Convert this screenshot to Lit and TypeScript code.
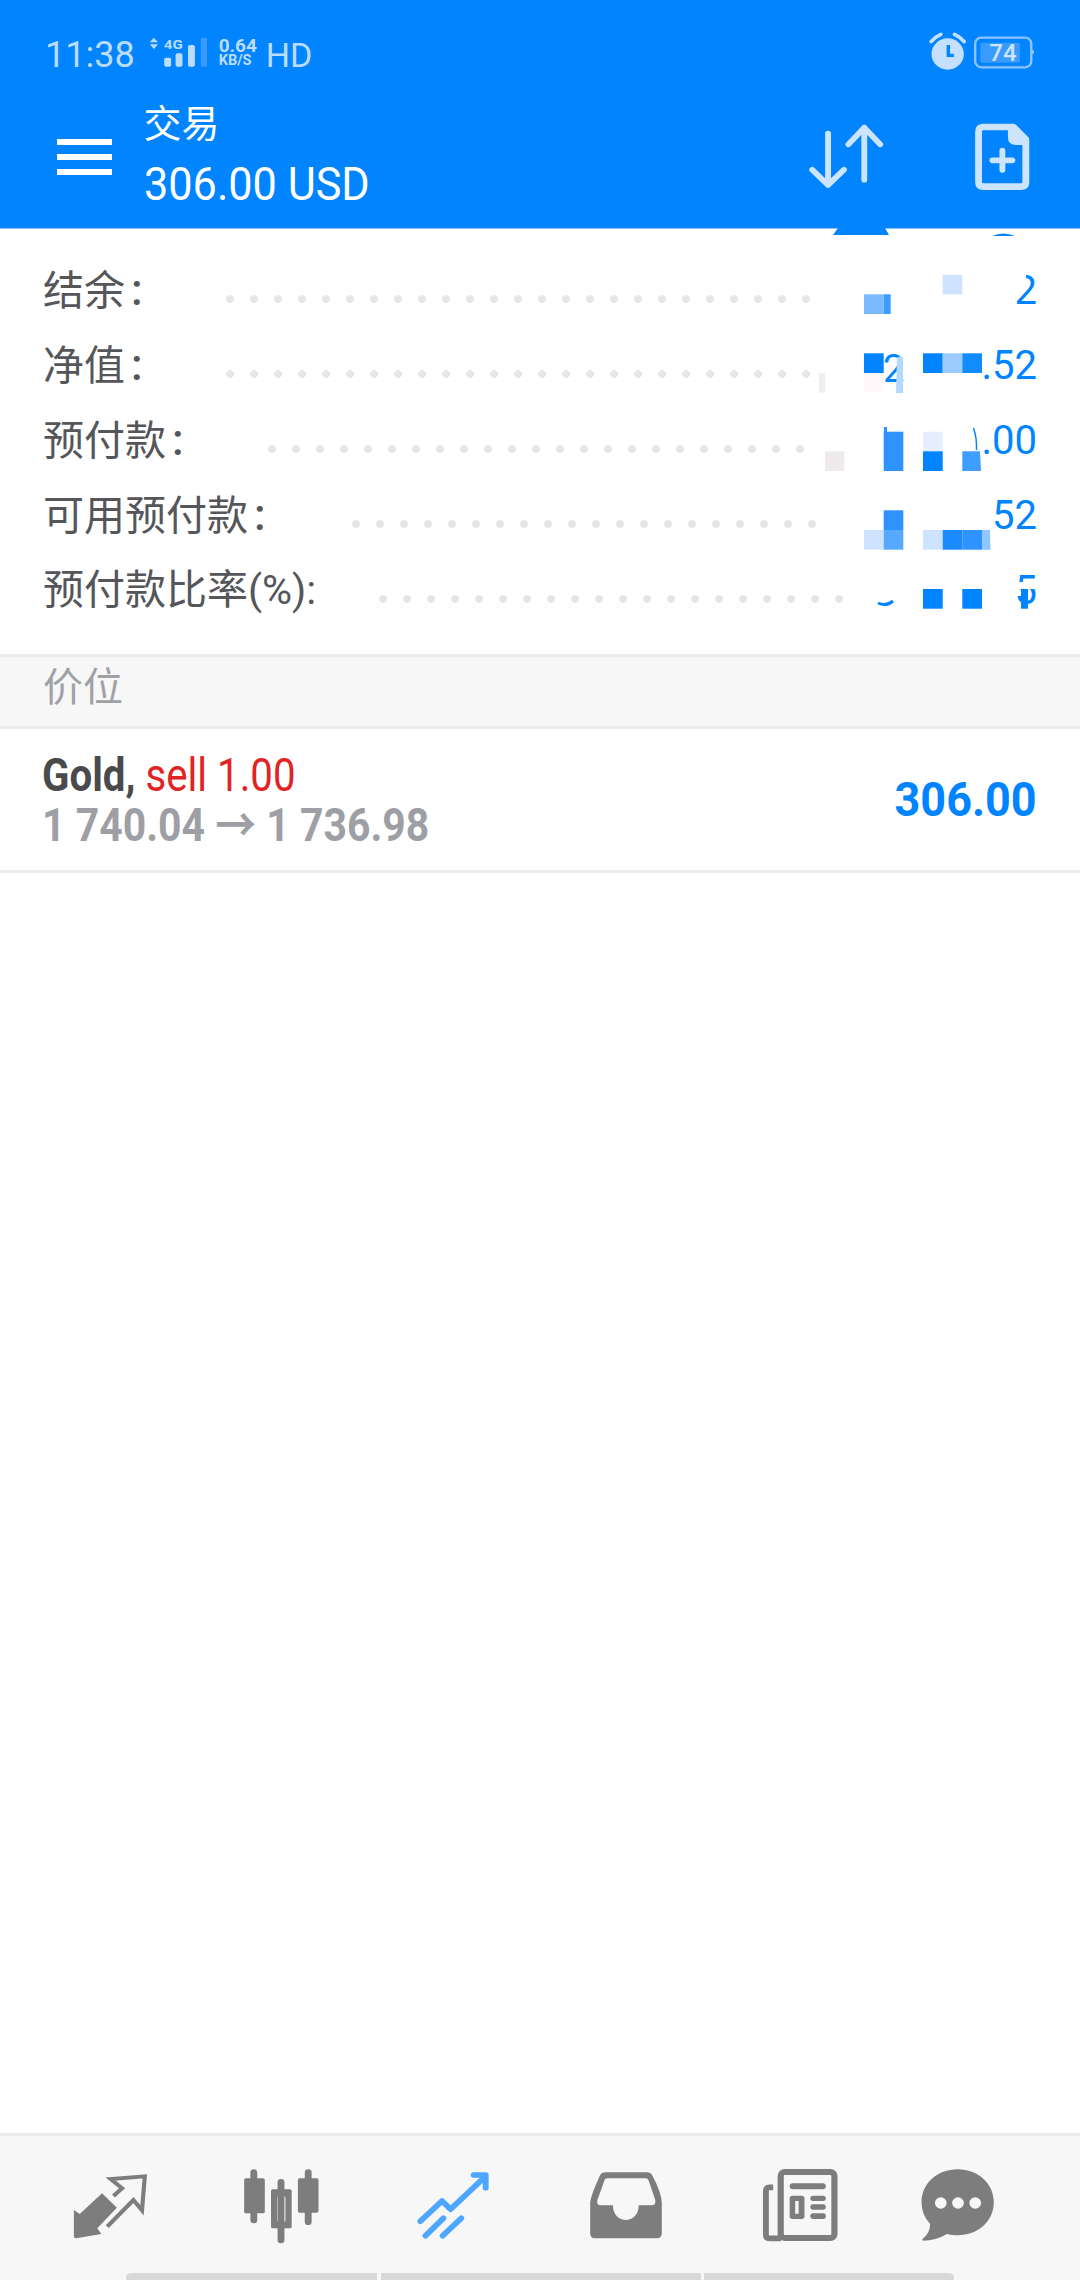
import { LitElement, html, css, svg } from "lit";
import { customElement } from "lit/decorators.js";
import { styleMap } from "lit/directives/style-map.js";

const DOT = 24;
const rows = [
  { label: "结余", colon: true, first: 229.7, count: 25, value: "2" },
  { label: "净值", colon: true, first: 229.7, count: 25, value: ".52" },
  { label: "预付款", colon: true, first: 272, count: 23, value: ".00" },
  { label: "可用预付款", colon: true, first: 356, count: 20, value: "52" },
  { label: "预付款比率(%):", colon: false, first: 383, count: 20, value: "5" },
];

const B = "#0084ff";
// Pixelated patches lying over the account values: x, y, w, h, colour
const cells: [number, number, number, number, string][] = [
  [1014, 274, 12, 10, "#ffffff"],
  [942.7, 275, 19.6, 19.4, "#cde3ff"],
  [864, 294.3, 19.7, 19.7, "#7bbaff"],
  [883.7, 294.3, 7, 19.7, "#3d9dff"],
  [864, 353.3, 19.7, 19.7, B],
  [864, 373, 19.7, 19.7, "#fff8fb"],
  [923, 353.3, 19.7, 19.7, B],
  [942.7, 353.3, 19.6, 19.7, "#9ccbff"],
  [962.3, 353.3, 19.7, 19.7, "#118cff"],
  [819, 373, 6, 19.7, "#eeeeee"],
  [884, 427, 3, 6, "#2e93ff"],
  [883.7, 431.7, 19.6, 39.3, "#2e93ff"],
  [923, 431.7, 19.7, 19.6, "#e5eeff"],
  [923, 451.3, 19.7, 19.7, B],
  [825, 451.3, 19.3, 19.7, "#eeeaee"],
  [883.7, 510.3, 19.6, 19.7, "#2e93ff"],
  [864, 530, 19.7, 19.7, "#cde3ff"],
  [883.7, 530, 19.6, 19.7, "#56a9ff"],
  [923, 530, 19.7, 19.7, "#cde3ff"],
  [942.7, 530, 19.6, 19.7, "#1a8bff"],
  [962.3, 530, 19.7, 19.7, "#2e93ff"],
  [923, 589, 19.7, 19.7, B],
  [962.3, 589, 19.7, 19.7, B],
  [1012, 582, 26, 7, "#ffffff"],
  [1021, 589, 7, 19.7, B],
];
const shapes = [
  { p: "897,357 903,357 903,393 896,393", c: "#b5d8ff" },
  { p: "962.3,451.3 980,451.3 981,471 962.3,471", c: "#3f9eff" },
  { p: "982,530 990,530 990.5,549.7 982,549.7", c: "#90c6ff" },
  { p: "838,228 885,228 889,235 833,235", c: B },
];

@customElement("app-root")
export class AppRoot extends LitElement {
  static styles = css`
    :host {
      display: flex;
      flex-direction: column;
      position: relative;
      width: 1080px;
      height: 2280px;
      overflow: hidden;
      background: #fff;
      font-family: Roboto, "Noto Sans CJK SC", sans-serif;
    }
    .header {
      background: #0084ff;
      border-bottom: 1px solid #8cc4ff;
      height: 228px;
      flex: none;
      display: flex;
      flex-direction: column;
    }
    .status {
      height: 64px;
      margin-top: 21px;
      flex: none;
      display: flex;
      align-items: center;
      padding: 0 46px 0 45px;
      color: #bcdcff;
    }
    .time { font-size: 36px; line-height: 40px; width: 103px; margin-top: 4px; }
    .signal { margin-top: -3px; display: block; }
    .speed {
      margin-left: 10.7px;
      display: flex;
      flex-direction: column;
      font-weight: 700;
      font-size: 19px;
      line-height: 17px;
      width: 40px;
      margin-top: -1px;
    }
    .speed small { font-size: 14.5px; line-height: 14px; }
    .hd { margin-left: 7px; font-size: 34px; line-height: 40px; margin-top: 4px; }
    .sys { margin-left: auto; display: block; margin-top: -3px; }
    .bar {
      flex: 1;
      display: flex;
      align-items: center;
      padding: 0 39px 0 57px;
    }
    .menu { width: 54.5px; display: flex; flex-direction: column; gap: 9px; }
    .menu i { display: block; height: 6px; background: #fff; }
    .title { margin-left: 32px; color: #fff; }
    .t1 { font-size: 38px; line-height: 60px; margin-top: -6px; }
    .t2 {
      font-size: 47px;
      line-height: 60px;
      transform: scaleX(0.92);
      transform-origin: left;
      white-space: nowrap;
    }
    .actions { margin-left: auto; display: flex; gap: 75px; }
    .actions svg { display: block; }

    .account { padding: 24px 0 26px; flex: none; }
    .row {
      height: 75px;
      display: flex;
      align-items: center;
      padding: 0 43px 0 43px;
      color: #55565a;
      font-size: 41px;
    }
    .label { flex: none; white-space: nowrap; line-height: 75px; }
    .colon { font-size: 44px; font-weight: 500; margin-left: 6px; }
    .leader {
      align-self: stretch;
      flex: none;
      background-image: radial-gradient(circle at 50% 46px, #e6e6e6 3.5px, transparent 4.3px);
      background-size: ${DOT}px 100%;
    }
    .value { margin-left: auto; color: #0084ff; font-size: 40px; }

    .section {
      flex: none;
      height: 69px;
      border-top: 3px solid #ebebeb;
      border-bottom: 3px solid #ebebeb;
      background: #f7f7f7;
      padding-left: 43px;
      font-size: 40px;
      line-height: 62px;
      color: #a0a1a6;
    }
    .position {
      flex: none;
      height: 141px;
      border-bottom: 3px solid #ebebeb;
      display: flex;
      align-items: center;
      justify-content: space-between;
      padding: 0 43px 0 42px;
      font-size: 46px;
      line-height: 50px;
    }
    .line { transform-origin: left; white-space: nowrap; }
    .gold { font-weight: 700; color: #4a4a4d; transform: scaleX(0.875); }
    .sell { color: #e02424; font-weight: 400; }
    .prices { font-weight: 700; color: #9d9fa4; transform: scaleX(0.89); }
    .profit {
      font-weight: 700;
      font-size: 48px;
      color: #0084ff;
      transform: scaleX(0.937);
      transform-origin: right;
    }
    .spacer { flex: 1; }

    .tabs {
      flex: none;
      height: 147px;
      box-sizing: border-box;
      border-top: 3px solid #ebebeb;
      background: #f7f7f7;
      padding-top: 24px;
      display: flex;
      flex-direction: column;
    }
    .icons {
      display: grid;
      grid-template-columns: 171.1px 172.2px 172.9px 173.6px 158px 84px;
      padding-left: 68.2px;
      height: 84px;
    }
    .icons svg { display: block; }
    .nav {
      margin-top: 29px;
      height: 7px;
      display: flex;
      gap: 3.5px;
      padding-left: 126px;
    }
    .nav i { display: block; height: 7px; background: #d8d8d8; }
    .nav i:nth-child(1) { width: 251px; border-top-left-radius: 5px; }
    .nav i:nth-child(2) { width: 320px; }
    .nav i:nth-child(3) { width: 250px; border-top-right-radius: 5px; }

    .mosaic { position: absolute; left: 0; top: 0; pointer-events: none; }
  `;

  private renderStatus() {
    return html`<div class="status">
      <span class="time">11:38</span>
      <svg class="signal" width="60" height="33.3" viewBox="430 110 174 100" preserveAspectRatio="none">
        <polygon points="447,118 459,132 435,132" fill="#bcdcff" />
        <polygon points="447,152 459,138 435,138" fill="#bcdcff" />
        <text x="476" y="152" font-size="36" font-weight="700" fill="#bcdcff" textLength="55" lengthAdjust="spacingAndGlyphs">4G</text>
        <rect x="477" y="178" width="20" height="27" rx="5" fill="#bcdcff" />
        <rect x="510" y="165" width="20" height="40" rx="5" fill="#bcdcff" />
        <rect x="546" y="140" width="20" height="65" rx="5" fill="#bcdcff" />
        <rect x="583" y="118" width="18" height="87" rx="5" fill="#3a9bff" />
      </svg>
      <span class="speed"><span>0.64</span><small>KB/S</small></span>
      <span class="hd">HD</span>
      <svg class="sys" width="106.7" height="43.3" viewBox="1125 95 310 130" preserveAspectRatio="none">
        <circle cx="1185" cy="167" r="47" fill="#c5e0ff" />
        <path d="M1187 140V171H1203" fill="none" stroke="#0084ff" stroke-width="10" />
        <path d="M1137 130Q1148 116 1165 108M1205 108Q1222 116 1233 130" fill="none" stroke="#c5e0ff" stroke-width="11" stroke-linecap="round" />
        <rect x="1265" y="118" width="163" height="89" rx="18" fill="none" stroke="#8dc4ff" stroke-width="7" />
        <rect x="1280" y="133" width="115" height="60" rx="6" fill="#3a9bff" />
        <circle cx="1431" cy="161" r="6" fill="#8dc4ff" />
        <text x="1346" y="188" font-size="70" font-weight="500" text-anchor="middle" fill="#cfe5ff">74</text>
      </svg>
    </div>`;
  }

  private renderBar() {
    return html`<div class="bar">
      <div class="menu"><i></i><i></i><i></i></div>
      <div class="title">
        <div class="t1">交易</div>
        <div class="t2">306.00 USD</div>
      </div>
      <div class="actions">
        <svg width="80" height="80" viewBox="772 348 232 240" preserveAspectRatio="none" fill="none" stroke="#cde4ff" stroke-width="17" stroke-linecap="round" stroke-linejoin="round">
          <path d="M836 398V552M790 506L836 552L882 506" />
          <path d="M941 536V380M895 430L941 380L987 430" />
        </svg>
        <svg width="80" height="80" viewBox="1222 348 232 240" preserveAspectRatio="none">
          <path d="M1273 392Q1273 378 1287 378H1374L1410 416V544Q1410 557 1396 557H1287Q1273 557 1273 544Z" fill="none" stroke="#cde4ff" stroke-width="20" stroke-linejoin="round" />
          <path d="M1358 380V408Q1358 432 1382 432H1418L1378 374Z" fill="#cde4ff" />
          <path d="M1342 449V507M1313 478H1371" stroke="#cde4ff" stroke-width="17" stroke-linecap="round" />
        </svg>
      </div>
    </div>`;
  }

  private renderRow(r: (typeof rows)[number]) {
    const start = r.first - DOT / 2;
    return html`<div class="row">
      <span class="label" style=${styleMap({ width: `${start - 43}px` })}>${r.label}${r.colon ? html`<span class="colon">:</span>` : ""}</span>
      <span class="leader" style=${styleMap({ width: `${r.count * DOT}px` })}></span>
      <span class="value">${r.value}</span>
    </div>`;
  }

  private renderTabs() {
    const g = "#7d7d7d";
    const bg = "#f7f7f7";
    return html`<div class="tabs">
      <div class="icons">
        <svg width="84" height="84" viewBox="198 150 244 252" preserveAspectRatio="none">
          <path d="M215 300L232 312L297 250L340 293L283 355L295 372L222 385Q215 385 215 378Z" fill=${g} />
          <path d="M330 258L355 235L322 207L421 199L413 301L388 270L312 350" fill="none" stroke=${g} stroke-width="12" />
        </svg>
        <svg width="84" height="84" viewBox="695 150 244 252" preserveAspectRatio="none" fill=${g}>
          <rect x="728" y="178" width="20" height="162" rx="10" />
          <rect x="710" y="205" width="60" height="105" rx="5" />
          <rect x="807" y="207" width="20" height="193" rx="10" />
          <path fill-rule="evenodd" d="M793 238H843Q848 238 848 243V350Q848 355 843 355H793Q788 355 788 350V243Q788 238 793 238ZM812 257Q806 257 806 263V331Q806 337 812 337H824Q830 337 830 331V263Q830 257 824 257Z" />
          <rect x="886" y="178" width="20" height="167" rx="10" />
          <rect x="866" y="205" width="60" height="103" rx="5" />
        </svg>
        <svg width="84" height="84" viewBox="1195 150 244 252" preserveAspectRatio="none" fill="none" stroke="#4da6ff" stroke-width="17">
          <path d="M1222 334L1285 273L1310 298L1410 200M1377 195H1412V233" stroke-linecap="round" stroke-linejoin="round" />
          <path d="M1237 377L1289 325M1287 377L1341 325" stroke-linecap="round" />
        </svg>
        <svg width="84" height="84" viewBox="129 150 244 252" preserveAspectRatio="none">
          <path fill=${g} d="M147 280Q147 260 175 197Q180 187 192 187H312Q322 187 328 197Q355 250 355 280V370Q355 385 340 385H160Q147 385 147 370Z" />
          <path fill=${bg} d="M197 205H308Q315 205 317 212L336 270Q339 286 325 286H288C288 345 213 345 213 286H178Q164 286 168 270L188 212Q190 205 197 205Z" />
        </svg>
        <svg width="84" height="84" viewBox="633 150 244 252" preserveAspectRatio="none" fill=${g}>
          <rect x="699" y="186" width="156" height="198" rx="12" fill="none" stroke=${g} stroke-width="18" />
          <path d="M677 232H667Q656 232 656 243V374Q656 385 667 385H700" fill="none" stroke=${g} stroke-width="17" />
          <rect x="725" y="220" width="105" height="18" rx="9" />
          <path fill-rule="evenodd" d="M733 257H760Q768 257 768 265V319Q768 327 760 327H733Q725 327 725 319V265Q725 257 733 257ZM741 273V311H751V273Z" />
          <rect x="785" y="257" width="45" height="16" rx="8" />
          <rect x="785" y="283" width="45" height="16" rx="8" />
          <rect x="785" y="310" width="45" height="17" rx="8" />
        </svg>
        <svg width="84" height="84" viewBox="1092 150 244 252" preserveAspectRatio="none">
          <path fill=${g} d="M1213 178C1272 178 1318 220 1318 277C1318 334 1272 376 1213 376Q1195 376 1182 372Q1150 392 1112 392L1110 388Q1134 368 1133 342Q1108 314 1108 277C1108 220 1154 178 1213 178Z" />
          <ellipse cx="1164" cy="279" rx="17" ry="17" fill=${bg} />
          <ellipse cx="1214" cy="279" rx="17" ry="17" fill=${bg} />
          <ellipse cx="1264" cy="279" rx="17" ry="17" fill=${bg} />
        </svg>
      </div>
      <div class="nav"><i></i><i></i><i></i></div>
    </div>`;
  }

  private renderMosaic() {
    return html`<svg class="mosaic" width="1080" height="700" viewBox="0 0 1080 700">
      <text x="883" y="382" font-family="Roboto" font-size="38" fill="#0084ff">2</text>
      ${cells.map(([x, y, w, h, c]) => svg`<rect x=${x} y=${y} width=${w} height=${h} fill=${c} />`)}
      ${shapes.map((s) => svg`<polygon points=${s.p} fill=${s.c} />`)}
      <path d="M992 236Q1003 231 1015 236Z" fill="#0084ff" />
      <path d="M973.5 428Q977 438 976.5 450" fill="none" stroke="#0084ff" stroke-width="1.5" />
      <path d="M878 603Q886 607 893 601" fill="none" stroke="#0084ff" stroke-width="3" />
    </svg>`;
  }

  render() {
    return html`
      <div class="header">${this.renderStatus()}${this.renderBar()}</div>
      <div class="account">${rows.map((r) => this.renderRow(r))}</div>
      <div class="section">价位</div>
      <div class="position">
        <div>
          <div class="line gold">Gold, <span class="sell">sell 1.00</span></div>
          <div class="line prices">1 740.04 → 1 736.98</div>
        </div>
        <div class="profit">306.00</div>
      </div>
      <div class="spacer"></div>
      ${this.renderTabs()}
      ${this.renderMosaic()}
    `;
  }
}
